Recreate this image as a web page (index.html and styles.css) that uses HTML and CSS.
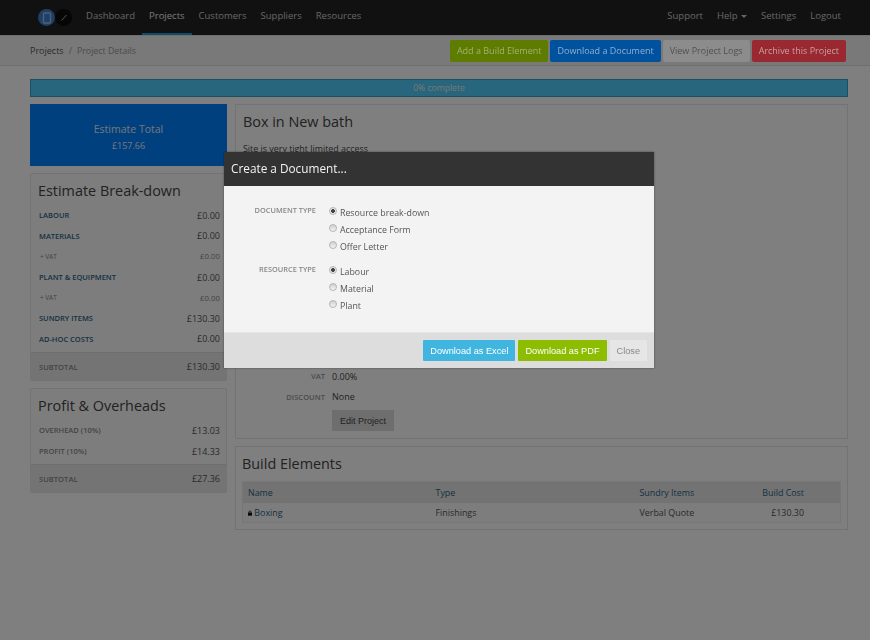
FILE: index.html
```html
<!DOCTYPE html>
<html lang="en">

<head>
    <meta charset="UTF-8">
    <title>Project Details</title>
    <link rel="stylesheet" href="styles.css">
</head>

<body>
    <nav class="navbar">
        <div class="logo">
            <span class="logo-disc logo-blue">
                <svg width="10" height="12" viewBox="0 0 10 12"><rect x="1.5" y="1" width="7" height="10" rx="1" fill="none" stroke="#9cc0e8" stroke-width="1.4"/></svg>
            </span>
            <span class="logo-disc logo-black">
                <svg width="10" height="10" viewBox="0 0 10 10"><path d="M2.5 7.5 L7.5 2" stroke="#aaa" stroke-width="1"/></svg>
            </span>
        </div>
        <a class="nav-link" href="#">Dashboard</a>
        <a class="nav-link active" href="#">Projects</a>
        <a class="nav-link" href="#">Customers</a>
        <a class="nav-link" href="#">Suppliers</a>
        <a class="nav-link" href="#">Resources</a>
        <div class="nav-right">
            <a class="nav-link" href="#">Support</a>
            <a class="nav-link" href="#">Help <span class="caret"></span></a>
            <a class="nav-link" href="#">Settings</a>
            <a class="nav-link" href="#">Logout</a>
        </div>
    </nav>

    <div class="subbar">
        <div class="crumbs"><a href="#">Projects</a><span class="sep">/</span><span class="current">Project Details</span></div>
        <div class="actions">
            <button class="btn btn-green">Add a Build Element</button>
            <button class="btn btn-blue">Download a Document</button>
            <button class="btn btn-grey">View Project Logs</button>
            <button class="btn btn-red">Archive this Project</button>
        </div>
    </div>

    <div class="progress">0% complete</div>

    <div class="columns">
        <div class="sidebar">
            <div class="total">
                <div class="total-label">Estimate Total</div>
                <div class="total-value">£157.66</div>
            </div>

            <div class="panel">
                <h3>Estimate Break-down</h3>
                <div class="row"><a href="#">LABOUR</a><span>£0.00</span></div>
                <div class="row"><a href="#">MATERIALS</a><span>£0.00</span></div>
                <div class="row row-small"><span>+ VAT</span><span>£0.00</span></div>
                <div class="row"><a href="#">PLANT &amp; EQUIPMENT</a><span>£0.00</span></div>
                <div class="row row-small"><span>+ VAT</span><span>£0.00</span></div>
                <div class="row"><a href="#">SUNDRY ITEMS</a><span>£130.30</span></div>
                <div class="row"><a href="#">AD-HOC COSTS</a><span>£0.00</span></div>
                <div class="subtotal"><label>SUBTOTAL</label><span>£130.30</span></div>
            </div>

            <div class="panel">
                <h3>Profit &amp; Overheads</h3>
                <div class="row"><label>OVERHEAD (10%)</label><span>£13.03</span></div>
                <div class="row"><label>PROFIT (10%)</label><span>£14.33</span></div>
                <div class="subtotal"><label>SUBTOTAL</label><span>£27.36</span></div>
            </div>
        </div>

        <div class="main">
            <div class="card card-project">
                <h2>Box in New bath</h2>
                <p>Site is very tight limited access</p>
                <div class="details">
                    <div class="detail"><label>VAT</label><span>0.00%</span></div>
                    <div class="detail"><label>DISCOUNT</label><span>None</span></div>
                    <button class="btn-edit">Edit Project</button>
                </div>
            </div>

            <div class="card card-build">
                <h2>Build Elements</h2>
                <table>
                    <thead>
                        <tr><th>Name</th><th>Type</th><th>Sundry Items</th><th class="num">Build Cost</th></tr>
                    </thead>
                    <tbody>
                        <tr>
                            <td>
                                <svg class="lock" width="4" height="6" viewBox="0 0 6 8"><path d="M1.5 4V2.2a1.5 1.5 0 0 1 3 0V4" fill="none" stroke="#111" stroke-width="1"/><rect y="3.5" width="6" height="4.5" fill="#111"/></svg>
                                <a href="#">Boxing</a>
                            </td>
                            <td>Finishings</td>
                            <td>Verbal Quote</td>
                            <td class="num">£130.30</td>
                        </tr>
                    </tbody>
                </table>
            </div>
        </div>
    </div>

    <div class="backdrop"></div>

    <div class="modal">
        <div class="modal-head">Create a Document...</div>
        <form class="modal-body">
            <div class="field">
                <div class="field-label">DOCUMENT TYPE</div>
                <div class="options">
                    <label><input type="radio" name="doc" checked>Resource break-down</label>
                    <label><input type="radio" name="doc">Acceptance Form</label>
                    <label><input type="radio" name="doc">Offer Letter</label>
                </div>
            </div>
            <div class="field">
                <div class="field-label">RESOURCE TYPE</div>
                <div class="options">
                    <label><input type="radio" name="res" checked>Labour</label>
                    <label><input type="radio" name="res">Material</label>
                    <label><input type="radio" name="res">Plant</label>
                </div>
            </div>
        </form>
        <div class="modal-foot">
            <button class="mbtn mbtn-excel">Download as Excel</button>
            <button class="mbtn mbtn-pdf">Download as PDF</button>
            <button class="mbtn mbtn-close">Close</button>
        </div>
    </div>
</body>

</html>
```

FILE: styles.css
```css
* {
    box-sizing: border-box;
}

html, body {
    height: 100%;
}

body {
    margin: 0;
    font-family: "Open Sans", sans-serif;
    font-size: 9px;
    color: #444;
    background-color: #fff;
    overflow: hidden;
}

a {
    color: #2a6485;
    text-decoration: none;
}

/* Top navigation */
.navbar {
    height: 35px;
    background-color: #222;
    display: flex;
    align-items: stretch;
    padding-left: 38px;
}

.logo {
    display: flex;
    align-items: center;
    width: 38px;
    margin-right: 3px;
}

.logo-disc {
    width: 17px;
    height: 17px;
    border-radius: 50%;
    display: flex;
    align-items: center;
    justify-content: center;
}

.logo-blue {
    background-color: #3e7ecc;
}

.logo-black {
    background-color: #0c0c0c;
}

.nav-link {
    color: #ccc;
    font-size: 9.5px;
    line-height: 32px;
    padding: 0 7px;
    border-bottom: 2px solid transparent;
}

.nav-link.active {
    color: #eee;
    border-bottom-color: #1f9ad6;
}

.nav-right {
    margin-left: auto;
    display: flex;
    padding-right: 22px;
}

.caret {
    display: inline-block;
    border: 3px solid transparent;
    border-top-color: #ccc;
    border-bottom: 0;
    vertical-align: middle;
    margin-left: 1px;
}

/* Breadcrumb bar */
.subbar {
    height: 31px;
    background-color: #f2f2f2;
    border-top: 1px solid #ddd;
    border-bottom: 1px solid #ddd;
    display: flex;
    align-items: center;
    justify-content: space-between;
    padding: 0 24px 0 30px;
}

.crumbs a {
    color: #555;
}

.sep {
    color: #999;
    margin: 0 5px;
}

.current {
    color: #999;
    font-size: 8.8px;
}

/* These stay brighter than the rest of the dimmed page */
.actions {
    position: relative;
    z-index: 2;
    display: flex;
    gap: 2px;
}

.btn {
    height: 22px;
    border: 0;
    border-radius: 2px;
    padding: 0 7px;
    font-family: inherit;
    font-size: 9px;
    color: #a8a8a8;
}

.btn-green {
    background-color: #5e7d00;
    color: #a3b070;
}

.btn-blue {
    background-color: #00529f;
    color: #8fb0d0;
}

.btn-grey {
    background-color: #8c8c8c;
    color: #505050;
}

.btn-red {
    background-color: #9a2830;
    color: #c8a0a0;
}

.progress {
    height: 18px;
    margin: 13px 22px 7px 30px;
    background-color: #4ecdfa;
    border: 1px solid #30a0c8;
    color: #eee;
    font-size: 8.6px;
    line-height: 16px;
    text-align: center;
}

/* Columns */
.columns {
    display: flex;
    gap: 8px;
    padding: 0 22px 0 30px;
    align-items: flex-start;
}

.sidebar {
    width: 197px;
    display: flex;
    flex-direction: column;
    gap: 7px;
}

.total {
    height: 62px;
    background-color: #0080ff;
    color: #e5ecf5;
    text-align: center;
    padding-top: 17px;
}

.total-label {
    font-size: 10.5px;
    line-height: 16px;
}

.total-value {
    font-size: 9px;
    line-height: 18px;
}

.panel {
    border: 1px solid #e6e6e6;
    border-radius: 2px;
    background-color: #fbfbfb;
}

.panel h3 {
    margin: 0;
    padding: 7px 7px 4px;
    font-size: 14.4px;
    line-height: 20px;
    font-weight: 400;
    color: #444;
}

.row {
    display: flex;
    justify-content: space-between;
    align-items: center;
    height: 20.6px;
    padding: 0 6px 0 8px;
    font-size: 9px;
    color: #555;
}

.row a, .row label {
    font-size: 7.5px;
    font-weight: 600;
}

.row label, .subtotal label {
    color: #888;
}

.row-small {
    font-size: 7.8px;
    color: #888;
}

.row-small span:first-child {
    font-size: 6.4px;
    padding-left: 1px;
}

.subtotal {
    height: 28px;
    margin-top: 3px;
    background-color: #e8e8e8;
    border-top: 1px solid #ddd;
    display: flex;
    justify-content: space-between;
    align-items: center;
    padding: 0 6px 0 8px;
    font-size: 9px;
    color: #555;
}

.subtotal label {
    font-size: 7.6px;
    font-weight: 600;
}

.main {
    flex: 1;
    display: flex;
    flex-direction: column;
    gap: 7px;
}

.card {
    border: 1px solid #e6e6e6;
    background-color: #fff;
}

.card h2 {
    margin: 0;
    font-size: 14.4px;
    line-height: 20px;
    font-weight: 400;
    color: #444;
}

.card-project {
    height: 335px;
    padding: 7px 7px 0;
}

.card-project p {
    margin: 10px 0 0;
    font-size: 8.9px;
    line-height: 14px;
}

.details {
    margin-top: 210px;
}

.detail {
    display: flex;
    align-items: center;
    gap: 7px;
    height: 20.5px;
}

.detail label {
    width: 82px;
    text-align: right;
    font-size: 7.6px;
    font-weight: 600;
    color: #999;
}

.btn-edit {
    display: block;
    margin: 3px 0 0 89px;
    height: 21px;
    padding: 0 8px;
    border: 0;
    background-color: #ddd;
    font-family: "Liberation Sans", sans-serif;
    font-size: 9px;
    color: #444;
}

.card-build {
    height: 84px;
    padding: 7px 6px 0;
}

table {
    width: 100%;
    margin-top: 7px;
    border-collapse: collapse;
    border: 1px solid #eee;
    table-layout: fixed;
    font-size: 8.9px;
}

th {
    height: 21px;
    padding: 0 5px;
    font-weight: 400;
    text-align: left;
    color: #2a6485;
    background-color: #e6e6e6;
}

td {
    height: 20px;
    padding: 0 5px;
    background-color: #fafafa;
    color: #555;
}

th:nth-child(1) {
    width: 188px;
}

th:nth-child(2) {
    width: 204px;
}

th:nth-child(3) {
    width: 102px;
}

.num {
    text-align: right;
    padding-right: 36px;
}

/* Dark layer and dialog sit over the page */
.backdrop {
    position: fixed;
    inset: 0;
    background-color: rgba(0, 0, 0, 0.5);
}

.modal {
    position: absolute;
    left: 224px;
    top: 152px;
    width: 430px;
    height: 216px;
    background-color: #f3f3f3;
    display: flex;
    flex-direction: column;
    box-shadow: 0 0 2px rgba(0, 0, 0, 0.4);
}

.modal-head {
    height: 34px;
    background-color: #333;
    color: #f2f2f2;
    font-size: 11.8px;
    line-height: 33px;
    padding-left: 7px;
}

.modal-body {
    flex: 1;
    padding-top: 18px;
}

.field {
    display: flex;
    margin-bottom: 8px;
}

.field-label {
    width: 92px;
    margin-top: -2px;
    text-align: right;
    font-size: 7.4px;
    font-weight: 600;
    line-height: 16px;
    color: #888;
}

.options {
    margin-left: 12px;
    display: flex;
    flex-direction: column;
}

.options label {
    display: flex;
    align-items: center;
    height: 17px;
    font-size: 8.8px;
    color: #555;
}

.options input {
    appearance: none;
    width: 8px;
    height: 8px;
    margin: 0 3px 3px 1px;
    border: 1px solid #b5b5b5;
    border-radius: 50%;
    background: linear-gradient(#cfcfcf, #f5f5f5);
}

.options input:checked {
    background: radial-gradient(circle, #444 0 1.6px, #e8e8e8 2.2px);
}

.modal-foot {
    height: 36px;
    background-color: #ddd;
    border-top: 1px solid #e6e6e6;
    display: flex;
    justify-content: flex-end;
    align-items: center;
    gap: 3px;
    padding-right: 7px;
}

.mbtn {
    height: 21px;
    border: 0;
    border-radius: 1px;
    font-family: "Liberation Sans", sans-serif;
    font-size: 9.2px;
    color: #fff;
    padding: 0 7px;
}

.mbtn-excel {
    background-color: #3fb5e0;
}

.mbtn-pdf {
    background-color: #8cbd00;
}

.mbtn-close {
    background-color: #e6e6e6;
    color: #888;
}
```
